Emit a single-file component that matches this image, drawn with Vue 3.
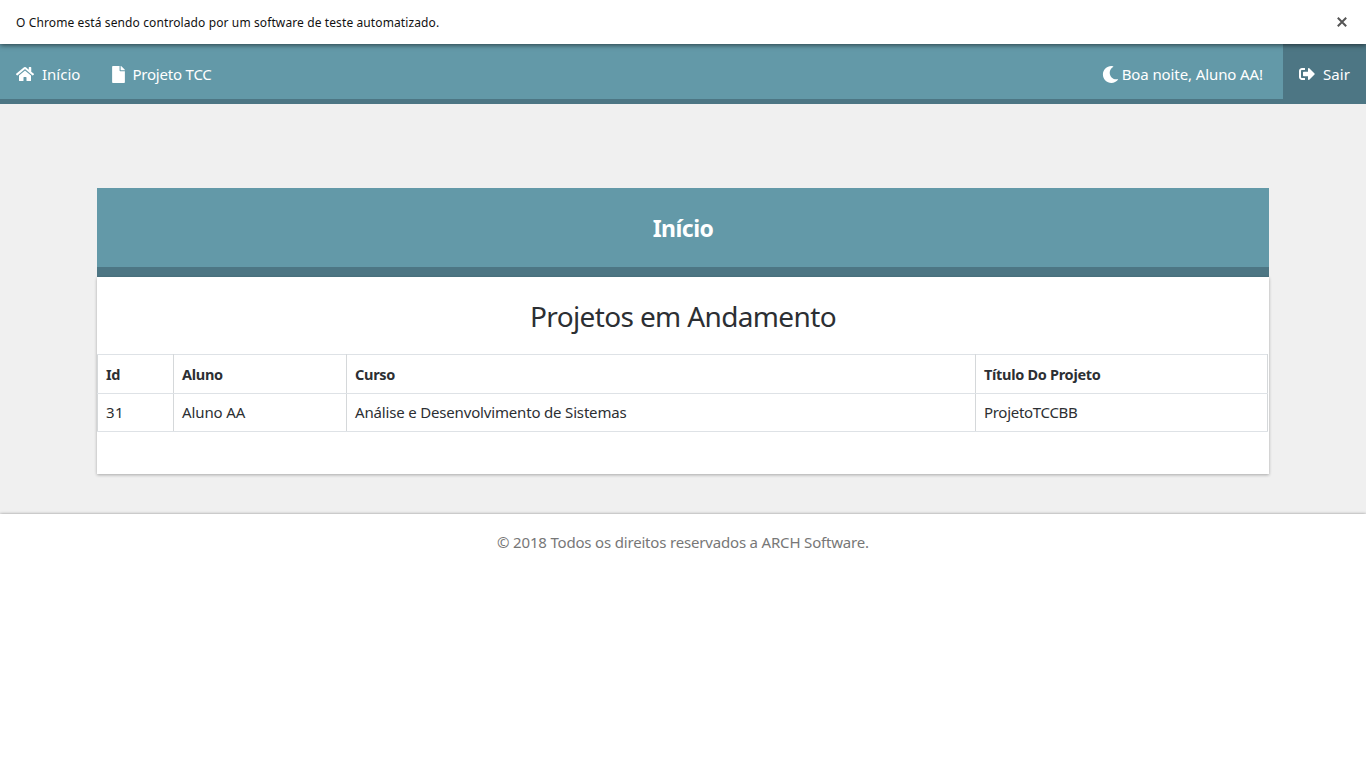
<script setup>
const columns = [
  { label: 'Id', value: '31', key: 'id' },
  { label: 'Aluno', value: 'Aluno AA', key: 'student' },
  { label: 'Curso', value: 'Análise e Desenvolvimento de Sistemas', key: 'course' },
  { label: 'Título Do Projeto', value: 'ProjetoTCCBB', key: 'title' },
]
</script>

<template>
  <div class="page">
    <div class="infobar">
      <span class="notice">O Chrome está sendo controlado por um software de teste automatizado.</span>
      <svg class="close" viewBox="0 0 10 10"><path d="M.8.8l8.4 8.4M9.2.8L.8 9.2" /></svg>
    </div>
    <nav class="navbar">
      <a class="link home">
        <svg class="icon i-home" viewBox="0 0 576 512"><path d="M280.37 148.26L96 300.11V464a16 16 0 0 0 16 16l112.06-.29a16 16 0 0 0 15.92-16V368a16 16 0 0 1 16-16h64a16 16 0 0 1 16 16v95.64a16 16 0 0 0 16 16.05L464 480a16 16 0 0 0 16-16V300L295.67 148.26a12.19 12.19 0 0 0-15.3 0zM571.6 251.47L488 182.56V44.05a12 12 0 0 0-12-12h-56a12 12 0 0 0-12 12v72.61L318.47 43a48 48 0 0 0-61 0L4.34 251.47a12 12 0 0 0-1.6 16.9l25.5 31A12 12 0 0 0 45.15 301l235.22-193.74a12.19 12.19 0 0 1 15.3 0L530.9 301a12 12 0 0 0 16.9-1.6l25.5-31a12 12 0 0 0-1.7-16.93z" /></svg>
        <span>Início</span>
      </a>
      <a class="link project">
        <svg class="icon i-file" viewBox="0 0 384 512"><path d="M224 136V0H24C10.7 0 0 10.7 0 24v464c0 13.3 10.7 24 24 24h336c13.3 0 24-10.7 24-24V160H248c-13.2 0-24-10.8-24-24zm160-14.1v6.1H256V0h6.1c6.4 0 12.5 2.5 17 7l97.9 98c4.5 4.5 7 10.6 7 16.9z" /></svg>
        <span>Projeto TCC</span>
      </a>
      <div class="greeting">
        <svg class="icon i-moon" viewBox="0 0 512 512"><path d="M283.211 512c78.962 0 151.079-35.925 198.857-94.792 7.068-8.708-.639-21.43-11.562-19.35-124.203 23.654-238.262-71.576-238.262-196.954 0-72.222 38.662-138.635 101.498-174.394 9.686-5.512 7.25-20.197-3.756-22.23A258.156 258.156 0 0 0 283.211 0c-141.309 0-256 114.511-256 256 0 141.309 114.511 256 256 256z" /></svg>
        <span>Boa noite, Aluno AA!</span>
      </div>
      <a class="logout">
        <svg class="icon i-out" viewBox="0 0 512 512"><path d="M497 273L329 441c-15 15-41 4.500-41-17v-96H152c-13.300 0-24-10.700-24-24v-96c0-13.300 10.700-24 24-24h136V88c0-21.400 25.900-32 41-17l168 168c9.300 9.400 9.300 24.600 0 34zM192 436v-40c0-6.600-5.400-12-12-12H96c-17.700 0-32-14.300-32-32V160c0-17.700 14.300-32 32-32h84c6.600 0 12-5.400 12-12V76c0-6.600-5.400-12-12-12H96c-53 0-96 43-96 96v192c0 53 43 96 96 96h84c6.600 0 12-5.400 12-12z" /></svg>
        <span>Sair</span>
      </a>
    </nav>
    <main class="content">
      <header class="banner"><h1>Início</h1></header>
      <section class="card">
        <h2>Projetos em Andamento</h2>
        <table>
          <colgroup><col v-for="c in columns" :key="c.key" :class="c.key" /></colgroup>
          <thead>
            <tr><th v-for="c in columns" :key="c.key">{{ c.label }}</th></tr>
          </thead>
          <tbody>
            <tr><td v-for="c in columns" :key="c.key"><span :class="'v-' + c.key">{{ c.value }}</span></td></tr>
          </tbody>
        </table>
      </section>
    </main>
    <footer class="footer">© 2018 Todos os direitos reservados a ARCH Software.</footer>
  </div>
</template>

<style>
body {
  background: #fff;
}
</style>

<style scoped>
.page {
  height: 768px;
  overflow: hidden;
  font: 15px/24px "Noto Sans", "Open Sans", sans-serif;
  color: #2c2f33;
  white-space: nowrap;
}
.infobar {
  position: relative;
  height: 44px;
  box-sizing: border-box;
  padding: 0 19px 0 16px;
  display: flex;
  align-items: center;
  justify-content: space-between;
  background: #fff;
  color: #111;
  font-size: 12px;
  letter-spacing: 0.11px;
  box-shadow: 0 1px 5px rgba(0, 0, 0, 0.6);
}
.notice {
  padding-top: 2px;
}
.close {
  width: 10px;
  height: 10px;
  fill: none;
  stroke: #555;
  stroke-width: 2;
}
.navbar {
  height: 60px;
  box-sizing: border-box;
  display: flex;
  background: #6399a8;
  border-bottom: 5px solid #4d7684;
  color: #fff;
}
.link,
.greeting,
.logout {
  display: flex;
  align-items: center;
  padding-top: 4px;
  box-sizing: border-box;
  height: 55px;
}
.icon {
  flex: none;
  height: 16px;
  margin-top: 1px;
  fill: currentColor;
}
.home {
  padding-left: 16px;
}
.i-home {
  width: 18px;
  margin-right: 8px;
}
.project {
  padding-left: 32px;
  letter-spacing: -0.2px;
}
.i-file {
  width: 13px;
  height: 17px;
  margin-right: 7px;
}
.greeting {
  margin-left: auto;
  padding-right: 20px;
  letter-spacing: -0.1px;
}
.i-moon {
  width: 17px;
  height: 17px;
  margin-right: 3px;
}
.logout {
  width: 83px;
  height: 60px;
  padding: 0 0 1px 16px;
  background: #4d7684;
  letter-spacing: 0.1px;
}
.i-out {
  width: 16px;
  margin-right: 8px;
}
.content {
  height: 410px;
  box-sizing: border-box;
  padding: 84px 97px 0;
  background: #f0f0f0;
}
.banner {
  height: 89px;
  box-sizing: border-box;
  display: flex;
  align-items: center;
  justify-content: center;
  background: #6399a8;
  border-bottom: 10px solid #4d7684;
}
h1 {
  margin: 0;
  color: #fff;
  font-size: 23px;
  line-height: 32px;
  letter-spacing: -0.55px;
}
.card {
  height: 197px;
  background: #fff;
  box-shadow: 0 1px 3px rgba(0, 0, 0, 0.3);
}
h2 {
  margin: 0;
  padding: 18px 0 17px;
  text-align: center;
  font-size: 28px;
  font-weight: 400;
  line-height: 42px;
  letter-spacing: -0.64px;
}
table {
  width: 1171px;
  table-layout: fixed;
  border-collapse: collapse;
}
.id {
  width: 76px;
}
.student {
  width: 173px;
}
.course {
  width: 629px;
}
th,
td {
  height: 38px;
  box-sizing: border-box;
  padding: 0 8px;
  border: 1px solid #dee2e6;
  border-left-color: #d5d8da;
  border-right-color: #d5d8da;
  text-align: left;
}
td {
  padding-bottom: 2px;
}
th {
  height: 39px;
  font-size: 14.5px;
  font-weight: 700;
  letter-spacing: -0.3px;
}
.v-id {
  letter-spacing: 0.3px;
}
.v-student {
  letter-spacing: -0.1px;
}
.v-course {
  letter-spacing: -0.17px;
}
.v-title {
  letter-spacing: -0.3px;
}
.footer {
  position: relative;
  height: 254px;
  box-sizing: border-box;
  padding-top: 16px;
  background: #fff;
  color: #777;
  text-align: center;
  letter-spacing: -0.18px;
  box-shadow: 0 0 3px rgba(0, 0, 0, 0.4);
}
</style>
